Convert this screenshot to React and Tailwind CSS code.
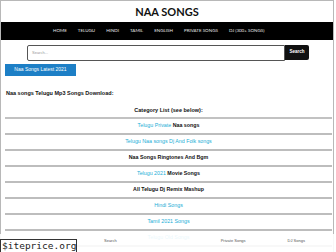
import React from "react";

const rows = [
    [{ t: "Telugu Private", c: true }, { t: " Naa songs" }],
    [{ t: "Telugu Naa songs Dj And Folk songs", c: true }],
    [{ t: "Naa Songs Ringtones And Bgm" }],
    [{ t: "Telugu 2021", c: true }, { t: " Movie Songs" }],
    [{ t: "All Telugu Dj Remix Mashup" }],
    [{ t: "Hindi Songs", c: true }],
    [{ t: "Tamil 2021 Songs", c: true }],
    [{ t: "Telugu Old Songs", c: true }],
];

const navItems = ["HOME", "TELUGU", "HINDI", "TAMIL", "ENGLISH", "PRIVATE SONGS", "DJ (300+ SONGS)"];

const App = () => {
    return (
        <div className="relative w-[336px] h-[252px] overflow-hidden bg-white font-['Liberation_Sans',sans-serif]">
            <div className="w-[334px] min-h-[260px] border-l border-t border-r border-[#b8b8b8]">
                <h1 className="h-[21px] pt-[5px] text-center text-[11px] leading-[11px] font-bold text-[#111] font-['Lato',sans-serif]">
                    NAA SONGS
                </h1>

                <nav className="h-[18px] bg-black flex items-center pl-[52px] gap-[11px] text-[4.5px] text-[#e6e6e6] font-['Lato',sans-serif]">
                    {navItems.map((n) => (
                        <span key={n}>{n}</span>
                    ))}
                </nav>

                <div className="mt-[5px] ml-[26px] w-[282px] h-[16px] flex">
                    <div className="flex-1 border border-[#555] rounded-l-[2px] flex items-center pl-[4px] text-[4px] text-[#999]">
                        Search...
                    </div>
                    <div className="w-[24px] h-[15px] bg-[#111] rounded-r-[2px] flex items-center justify-center text-[4.5px] font-bold text-white">
                        Search
                    </div>
                </div>

                <div className="mt-[3px] ml-[4px] w-[71px] h-[12px] bg-[#1d7fc6] flex items-center justify-center text-[5px] text-white">
                    Naa Songs Latest 2021
                </div>

                <p className="mt-[10px] ml-[5px] h-[14px] leading-[14px] text-[5.5px] font-bold text-[#111]">
                    Naa songs Telugu Mp3 Songs Download:
                </p>

                <div className="mt-[3px] ml-[4px] mr-[1px]">
                    <div className="h-[16px] border-b-2 border-[#c2c2c2] flex items-center justify-center text-[5.5px] font-bold text-[#111]">
                        Category List (see below):
                    </div>
                    {rows.map((r, i) => (
                        <div
                            key={i}
                            className="h-[16px] border-b-2 border-[#bdbdbd] flex items-center justify-center text-[5.3px]"
                        >
                            {r.map((s, j) => (
                                <span
                                    key={j}
                                    className={s.c ? "text-[#22aed6]" : "font-bold text-[#111]"}
                                >
                                    {s.t.startsWith(" ") ? "\u00a0" + s.t.slice(1) : s.t}
                                </span>
                            ))}
                        </div>
                    ))}
                </div>
            </div>

            <div className="absolute left-0 bottom-0 w-[336px] h-[18px] bg-white/90 flex items-start pt-[4px] text-[4px] text-[#555]">
                <span className="ml-[104px]">Search</span>
                <span className="ml-[104px]">Private Songs</span>
                <span className="ml-[42px]">DJ Songs</span>
            </div>

            <div className="absolute left-0 top-[239px] w-[77px] h-[16px] bg-white border border-[#333] pl-[1px] text-[9.5px] leading-[12px] text-[#222] font-['DejaVu_Sans_Mono',monospace]">
                $iteprice.org
            </div>
        </div>
    );
};

export default App;
